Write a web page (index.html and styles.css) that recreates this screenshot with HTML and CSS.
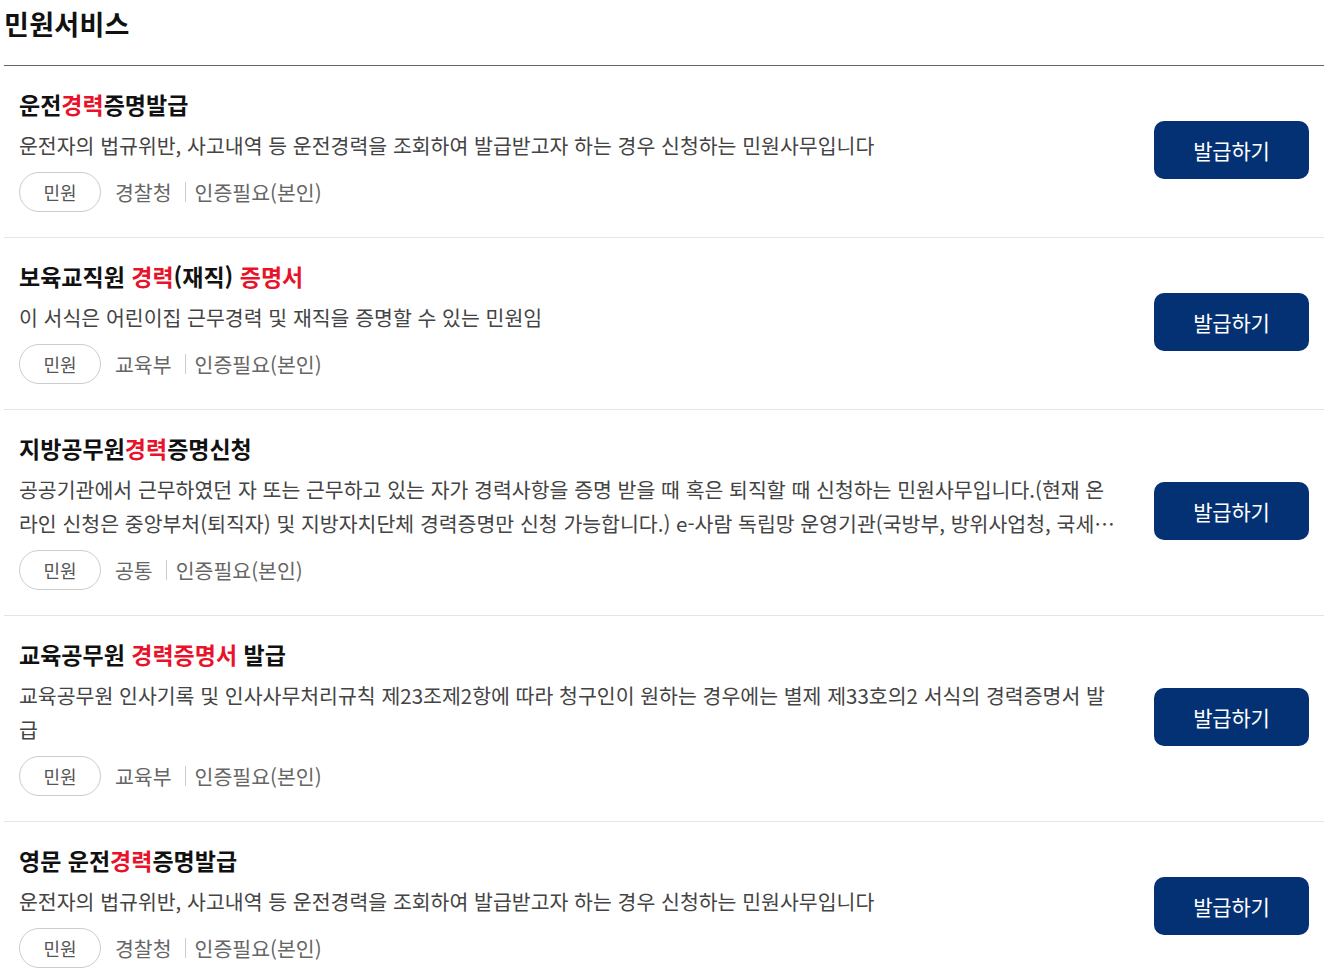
FILE: index.html
```html
<!DOCTYPE html>
<html lang="ko">
<head>
<meta charset="utf-8">
<title>민원서비스</title>
<link rel="stylesheet" href="styles.css">
</head>
<body>
<div class="page">
  <h2 class="page-title">민원서비스</h2>
  <ul class="svc-list">
    <li class="svc-item">
      <div class="svc-body">
        <h3 class="svc-title">운전<em>경력</em>증명발급</h3>
        <p class="svc-desc">운전자의 법규위반, 사고내역 등 운전경력을 조회하여 발급받고자 하는 경우 신청하는 민원사무입니다</p>
        <div class="svc-meta">
          <span class="pill">민원</span>
          <span class="meta-org">경찰청</span>
          <span class="meta-auth">인증필요(본인)</span>
        </div>
      </div>
      <button class="btn-issue" type="button">발급하기</button>
    </li>
    <li class="svc-item">
      <div class="svc-body">
        <h3 class="svc-title">보육교직원 <em>경력</em>(재직) <em>증명서</em></h3>
        <p class="svc-desc">이 서식은 어린이집 근무경력 및 재직을 증명할 수 있는 민원임</p>
        <div class="svc-meta">
          <span class="pill">민원</span>
          <span class="meta-org">교육부</span>
          <span class="meta-auth">인증필요(본인)</span>
        </div>
      </div>
      <button class="btn-issue" type="button">발급하기</button>
    </li>
    <li class="svc-item">
      <div class="svc-body">
        <h3 class="svc-title">지방공무원<em>경력</em>증명신청</h3>
        <p class="svc-desc clamp">공공기관에서 근무하였던 자 또는 근무하고 있는 자가 경력사항을 증명 받을 때 혹은 퇴직할 때 신청하는 민원사무입니다.(현재 온라인 신청은 중앙부처(퇴직자) 및 지방자치단체 경력증명만 신청 가능합니다.) e-사람 독립망 운영기관(국방부, 방위사업청, 국세청, 관세청, 경찰청 등)은 해당 기관으로 신청하시기 바랍니다.</p>
        <div class="svc-meta">
          <span class="pill">민원</span>
          <span class="meta-org">공통</span>
          <span class="meta-auth">인증필요(본인)</span>
        </div>
      </div>
      <button class="btn-issue" type="button">발급하기</button>
    </li>
    <li class="svc-item">
      <div class="svc-body">
        <h3 class="svc-title">교육공무원 <em>경력증명서</em> 발급</h3>
        <p class="svc-desc">교육공무원 인사기록 및 인사사무처리규칙 제23조제2항에 따라 청구인이 원하는 경우에는 별제 제33호의2 서식의 경력증명서 발급</p>
        <div class="svc-meta">
          <span class="pill">민원</span>
          <span class="meta-org">교육부</span>
          <span class="meta-auth">인증필요(본인)</span>
        </div>
      </div>
      <button class="btn-issue" type="button">발급하기</button>
    </li>
    <li class="svc-item">
      <div class="svc-body">
        <h3 class="svc-title">영문 운전<em>경력</em>증명발급</h3>
        <p class="svc-desc">운전자의 법규위반, 사고내역 등 운전경력을 조회하여 발급받고자 하는 경우 신청하는 민원사무입니다</p>
        <div class="svc-meta">
          <span class="pill">민원</span>
          <span class="meta-org">경찰청</span>
          <span class="meta-auth">인증필요(본인)</span>
        </div>
      </div>
      <button class="btn-issue" type="button">발급하기</button>
    </li>
  </ul>
</div>
</body>
</html>
```

FILE: styles.css
```css
* { box-sizing: border-box; }
html, body { margin: 0; padding: 0; background: #fff; }
body {
  font-family: "Noto Sans CJK KR", "Noto Sans", sans-serif;
  color: #111;
}
.page {
  width: 1320px;
  margin-left: 4px;
}
.page-title {
  margin: 0;
  height: 66px;
  padding-top: 4px;
  font-size: 27px;
  line-height: 40px;
  font-weight: 700;
  letter-spacing: 0.3px;
  color: #111;
  border-bottom: 1px solid #666;
}
.svc-list {
  list-style: none;
  margin: 0;
  padding: 0;
}
.svc-item {
  display: flex;
  align-items: center;
  gap: 32px;
  padding: 22px 15px 25px 15px;
  border-bottom: 1px solid #e5e5e5;
}
.svc-body {
  flex: 1;
  min-width: 0;
}
.svc-title {
  margin: 0;
  font-size: 23px;
  line-height: 32px;
  font-weight: 700;
  letter-spacing: 0;
  color: #111;
}
.svc-title em {
  font-style: normal;
  color: #e8132a;
}
.svc-desc {
  margin: 8px 0 0;
  font-size: 20.5px;
  line-height: 34px;
  letter-spacing: 0;
  color: #444;
}
.svc-desc.clamp {
  display: -webkit-box;
  -webkit-line-clamp: 2;
  -webkit-box-orient: vertical;
  overflow: hidden;
  max-height: 68px;
}
.svc-meta {
  display: flex;
  align-items: center;
  margin-top: 10px;
  font-size: 20.5px;
  letter-spacing: 0;
  color: #666;
}
.pill {
  display: inline-flex;
  align-items: center;
  justify-content: center;
  width: 82px;
  height: 40px;
  border: 1px solid #ccc;
  border-radius: 20px;
  font-size: 18px;
  color: #555;
  margin-right: 14px;
}
.meta-org {
  padding-right: 13px;
  margin-right: 9px;
  border-right: 1px solid #ccc;
  line-height: 20px;
}
.btn-issue {
  flex: none;
  width: 155px;
  height: 58px;
  border: none;
  border-radius: 10px;
  background: #043174;
  color: #fff;
  font-family: "Noto Sans CJK KR", "Noto Sans", sans-serif;
  font-size: 21px;
  letter-spacing: -0.2px;
  cursor: pointer;
}
```
